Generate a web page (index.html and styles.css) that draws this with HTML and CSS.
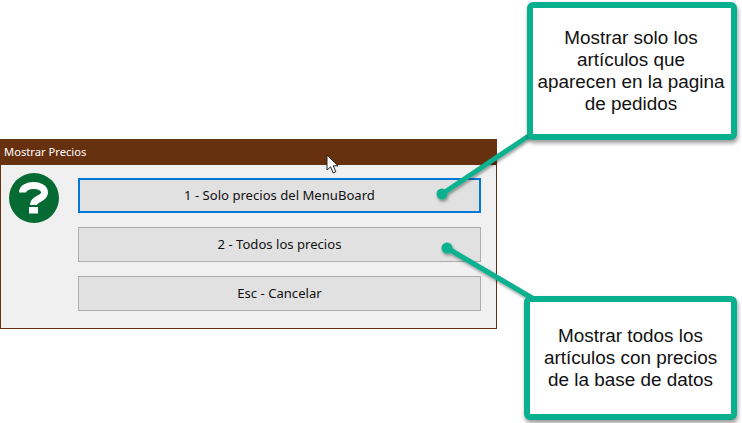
FILE: index.html
```html
<!DOCTYPE html>
<html lang="es">
<head>
<meta charset="utf-8">
<title>Mostrar Precios</title>
<link rel="stylesheet" href="styles.css">
</head>
<body>
<main class="dialog">
  <header class="titlebar">Mostrar Precios</header>
  <div class="content">
    <svg class="help" width="50" height="50" viewBox="0 0 50 50" aria-hidden="true">
      <circle cx="25" cy="25" r="25" fill="#056b33"/>
      <path d="M13.5 19.5 C13.5 10.5 35.5 10 35.5 19.5 C35.5 26.5 24.5 25 24.5 32" fill="none" stroke="#fff" stroke-width="7"/>
      <rect x="20" y="34" width="9" height="6.5" fill="#fff"/>
    </svg>
    <div class="actions">
      <button class="action focused">1 - Solo precios del MenuBoard</button>
      <button class="action">2 - Todos los precios</button>
      <button class="action">Esc - Cancelar</button>
    </div>
  </div>
</main>
<svg class="cursor" width="14" height="22" viewBox="0 0 14 22" aria-hidden="true">
  <path d="M1 1 V16 L4.6 12.8 L7.2 19 L9.8 17.8 L7.2 11.8 H12 Z" fill="#fff" stroke="#222" stroke-width="1"/>
</svg>
<svg class="connectors" width="742" height="423" viewBox="0 0 742 423" aria-hidden="true">
  <defs>
    <filter id="shadow" x="-20%" y="-20%" width="140%" height="140%">
      <feDropShadow dx="1" dy="2" stdDeviation="1.6" flood-color="#000" flood-opacity="0.4"/>
    </filter>
  </defs>
  <g filter="url(#shadow)" stroke="#09b08f" stroke-width="5" fill="#09b08f">
    <path d="M442 194 L530 135" fill="none"/>
    <circle cx="442" cy="194" r="4.5" stroke-width="2"/>
    <path d="M447 248 L532 298" fill="none"/>
    <circle cx="447" cy="248" r="4.5" stroke-width="2"/>
  </g>
</svg>
<aside class="callout callout-top">Mostrar solo los artículos que aparecen en la pagina de pedidos</aside>
<aside class="callout callout-bottom">Mostrar todos los artículos con precios de la base de datos</aside>
</body>
</html>
```
FILE: styles.css
```css
html, body {
  margin: 0;
  padding: 0;
  background: #fff;
}
body {
  position: relative;
  width: 742px;
  height: 423px;
  overflow: hidden;
  padding-top: 139px;
  box-sizing: border-box;
}
.dialog {
  width: 497px;
  height: 190px;
  box-sizing: border-box;
  border: 1px solid #67300e;
  border-top: 0;
  background: #f0f0f0;
  font-family: "Noto Sans", "Open Sans", sans-serif;
}
.titlebar {
  margin: 0 -1px;
  height: 26px;
  padding-left: 4px;
  background: #67300e;
  color: #fff;
  font-size: 11.2px;
  line-height: 26px;
}
.content {
  display: flex;
  align-items: flex-start;
  padding: 8px 15px 0 8px;
  gap: 19px;
}
.help {
  flex: none;
}
.actions {
  flex: 1;
  display: flex;
  flex-direction: column;
  gap: 14px;
  margin-top: 5px;
}
.action {
  height: 35px;
  padding: 0 0 2px;
  border: 1px solid #adadad;
  background: #e1e1e1;
  color: #111;
  font-family: inherit;
  font-size: 13.1px;
  text-align: center;
}
.focused {
  border: 2px solid #0078d7;
}
.cursor {
  position: absolute;
  left: 326px;
  top: 154px;
}
.connectors {
  position: absolute;
  left: 0;
  top: 0;
}
.callout {
  position: absolute;
  display: flex;
  align-items: center;
  justify-content: center;
  box-sizing: border-box;
  border: 6px solid #09b08f;
  border-radius: 6px;
  background: #fff;
  box-shadow: 1px 3px 4px rgba(0, 0, 0, 0.4);
  color: #111;
  font-family: "Liberation Sans", Arial, sans-serif;
  font-size: 18.9px;
  line-height: 22px;
  text-align: center;
}
.callout-top {
  left: 527px;
  top: 2px;
  width: 210px;
  height: 138px;
  padding: 0 6px 0 4px;
}
.callout-bottom {
  left: 524px;
  top: 296px;
  width: 213px;
  height: 124px;
  padding: 0 8px;
}
```
